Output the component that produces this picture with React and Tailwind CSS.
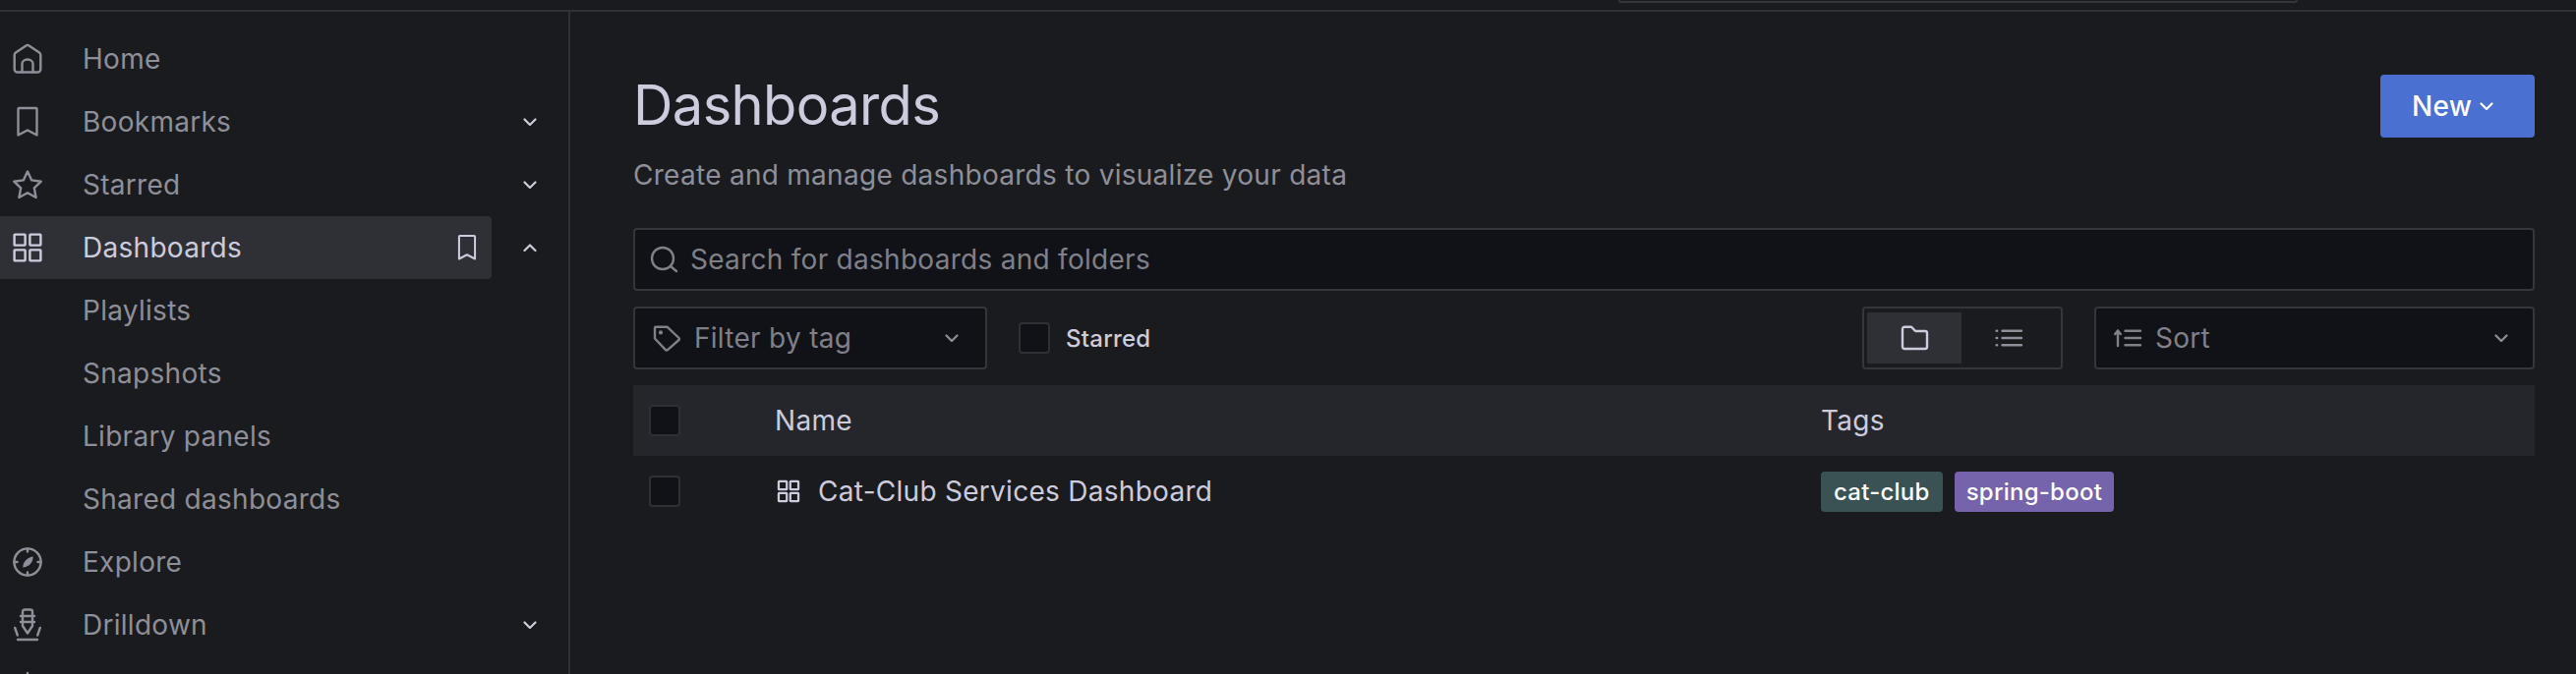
import React from "react";

const Svg = ({ className = "w-8 h-8", sw = 2.4, children }) => (
  <svg viewBox="0 0 32 32" fill="none" stroke="currentColor" strokeWidth={sw} strokeLinecap="round" strokeLinejoin="round" className={`shrink-0 overflow-visible ${className}`}>
    {children}
  </svg>
);

const Home = () => (
  <Svg>
    <path d="M14.5 2.4L4 9.6a3 3 0 0 0-1.3 2.4v14.5a3 3 0 0 0 3 3h20.6a3 3 0 0 0 3-3V12a3 3 0 0 0-1.3-2.4L17.5 2.4a2.6 2.6 0 0 0-3 0z" />
    <path d="M10.5 29.5V21a5.5 4.5 0 0 1 11 0v8.5" />
  </Svg>
);
const Bookmark = ({ className }) => (
  <Svg className={className}>
    <path d="M7.5 2H24.5a1 1 0 0 1 1 1v26.5L16 24.5l-9.5 5V3a1 1 0 0 1 1-1z" />
  </Svg>
);
const Star = () => (
  <Svg>
    <path d="M16 2.6l4.2 8.8 9.6 1.3-7 6.7 1.8 9.6-8.6-4.7-8.6 4.7 1.8-9.6-7-6.7 9.6-1.3z" />
  </Svg>
);
const Apps = ({ className, sw }) => (
  <Svg className={className} sw={sw}>
    <rect x="2.6" y="2.6" width="11" height="11" rx="0.6" />
    <rect x="18.4" y="2.6" width="11" height="11" rx="0.6" />
    <rect x="2.6" y="18.4" width="11" height="11" rx="0.6" />
    <rect x="18.4" y="18.4" width="11" height="11" rx="0.6" />
  </Svg>
);
const Compass = () => (
  <Svg>
    <circle cx="16" cy="16" r="13.6" />
    <path d="M16 2.5v3M16 26.5v3M2.5 16h3M26.5 16h3" />
    <path d="M21.6 10.4c.2 4-2 7.6-5 9.4-1.4.9-3 1.5-5.4 1.8.2-3.6 1.6-6.4 4-8.4 2-1.7 4-2.5 6.4-2.8z" fill="currentColor" stroke="none" />
  </Svg>
);
const Drilldown = () => (
  <Svg>
    <path d="M13 0.5h6a2 2 0 0 1 2 2V17l-5 7.5-5-7.5V2.5a2 2 0 0 1 2-2z" />
    <path d="M9 7h14M9 13h14" />
    <path d="M3.2 19l2.6 7.5M28.8 19l-2.6 7.5" />
    <path d="M6 31h20" />
  </Svg>
);
const Bell = () => (
  <Svg>
    <path d="M16 1v3M6 24V15a10 10 0 0 1 20 0v9l3 3H3z" />
  </Svg>
);
const Chevron = ({ up, className = "text-[#ccccdc]" }) => (
  <svg viewBox="0 0 24 24" fill="none" stroke="currentColor" strokeWidth="2.2" strokeLinecap="round" strokeLinejoin="round" className={`w-6 h-6 shrink-0 ${className}`}>
    <path d={up ? "M6.5 15l5.5-5.5 5.5 5.5" : "M6.5 9.5l5.5 5.5 5.5-5.5"} />
  </svg>
);
const Search = () => (
  <Svg>
    <circle cx="14" cy="15" r="11" />
    <path d="M22 23l6 5" />
  </Svg>
);
const Tag = () => (
  <Svg>
    <path d="M4 4.7h11.5L27.5 16a1.4 1.4 0 0 1 0 2L16 28.2a1.4 1.4 0 0 1-2 0L3 16.5V5.7a1 1 0 0 1 1-1z" />
    <circle cx="9" cy="10.4" r="0.9" fill="currentColor" />
  </Svg>
);
const Folder = () => (
  <Svg>
    <path d="M6 4.7h6.5a1.5 1.5 0 0 1 1.1.5l3 3.3a1.5 1.5 0 0 0 1.1.5H27a2 2 0 0 1 2 2V25a2 2 0 0 1-2 2H6a2 2 0 0 1-2-2V6.7a2 2 0 0 1 2-2z" />
  </Svg>
);
const ListIcon = () => (
  <Svg>
    <path d="M9.5 8.7H29M9.5 16H29M9.5 23.3H29" />
    <path d="M3.6 8.7h.6M3.6 16h.6M3.6 23.3h.6" />
  </Svg>
);
const SortIcon = () => (
  <Svg>
    <path d="M6 24V8.5M3.2 12L6 8.5 8.8 12" />
    <path d="M13.5 8.7H29M13.5 16H29M13.5 23.3H29" />
  </Svg>
);

const Row = ({ icon, label, chevron, active }) => (
  <div className="flex items-center h-16">
    <div className={`flex items-center h-16 w-[501px] rounded-r-[4px] ${active ? "bg-[#2f3036] text-[#ccccdc]" : "text-[#8e8f98]"}`}>
      <div className="w-[84px] pl-3 shrink-0">{icon}</div>
      <span className="flex-1 text-[28px] tracking-[0.01em]">{label}</span>
      {active && <Bookmark className="w-8 h-8 mr-[9px] scale-[0.85]" />}
    </div>
    {chevron && (
      <div className="w-[78px] flex justify-center">
        <Chevron up={chevron === "up"} />
      </div>
    )}
  </div>
);

const Checkbox = () => <div className="w-8 h-8 shrink-0 rounded-[4px] border-2 border-[#2f3036] bg-[#111217]" />;

export default function App() {
  return (
    <div className="w-[2620px] h-[686px] overflow-hidden flex flex-col bg-[#1a1b1f] font-['Inter',sans-serif] text-[#ccccdc]">
      <div className="h-3 shrink-0 border-b-2 border-[#2f3036] pl-[1646px]">
        <div className="w-[691px] h-[3px] border-b-2 border-x-2 rounded-b-[4px] border-[#35363c]" />
      </div>
      <div className="flex flex-1 min-h-0">
        <nav className="w-[580px] shrink-0 border-r-2 border-[#2f3036] pt-4 flex flex-col">
          <Row icon={<Home />} label="Home" />
          <Row icon={<Bookmark />} label="Bookmarks" chevron="down" />
          <Row icon={<Star />} label="Starred" chevron="down" />
          <Row icon={<Apps />} label="Dashboards" chevron="up" active />
          <Row label="Playlists" />
          <Row label="Snapshots" />
          <Row label="Library panels" />
          <Row label="Shared dashboards" />
          <Row icon={<Compass />} label="Explore" />
          <Row icon={<Drilldown />} label="Drilldown" chevron="down" />
          <Row icon={<Bell />} />
        </nav>
        <main className="flex-1 min-w-0 pl-16 pr-[42px] pt-16">
          <div className="flex justify-between items-start h-[122px]">
            <div>
              <h1 className="text-[56px] leading-[64px] font-normal tracking-[-0.011em] -mt-[1px]">Dashboards</h1>
              <p className="mt-[19px] text-[28px] leading-[40px] tracking-[0.01em] text-[#8e8f98]">Create and manage dashboards to visualize your data</p>
            </div>
            <button className="w-[157px] h-16 rounded-[4px] bg-[#4a70d2] text-white flex items-center pl-[32px]">
              <span className="text-[28px] font-medium tracking-[0.01em]">New</span>
              <Chevron className="text-white ml-[3px]" />
            </button>
          </div>
          <div className="mt-[34px] h-16 flex items-center rounded-[4px] border-2 border-[#35363c] bg-[#111217] pl-[14px] text-[#7f8088]">
            <Search />
            <span className="ml-[10px] text-[28px] tracking-[0.01em]">Search for dashboards and folders</span>
          </div>
          <div className="mt-4 h-16 flex items-center">
            <div className="w-[360px] h-16 flex items-center rounded-[4px] border-2 border-[#35363c] bg-[#111217] pl-[17px] pr-[22px] text-[#7f8088]">
              <Tag />
              <span className="ml-[11px] flex-1 text-[28px] tracking-[0.01em]">Filter by tag</span>
              <Chevron className="text-[#8e8f98]" />
            </div>
            <div className="ml-8"><Checkbox /></div>
            <span className="ml-4 pt-[2px] text-[24px] font-medium tracking-[0.01em]">Starred</span>
            <div className="ml-auto w-[204px] h-16 rounded-[4px] border-2 border-[#35363c] py-[4px] px-[3px] flex">
              <div className="flex-1 bg-[#2f3036] flex items-center justify-center text-[#ccccdc]"><Folder /></div>
              <div className="flex-1 flex items-center justify-center text-[#8e8f98] pr-[2px]"><ListIcon /></div>
            </div>
            <div className="ml-8 w-[448px] h-16 flex items-center rounded-[4px] border-2 border-[#35363c] bg-[#111217] pl-[16px] pr-[20px] text-[#7f8088]">
              <SortIcon />
              <span className="ml-[12px] flex-1 text-[28px] tracking-[0.01em]">Sort</span>
              <Chevron className="text-[#8e8f98]" />
            </div>
          </div>
          <div className="mt-4 h-[72px] bg-[#25262b] flex items-center pl-4">
            <Checkbox />
            <span className="ml-[96px] w-[1064px] text-[28px] tracking-[0.01em]">Name</span>
            <span className="text-[28px] tracking-[0.01em]">Tags</span>
          </div>
          <div className="h-[72px] flex items-center pl-4">
            <Checkbox />
            <div className="ml-[98px] w-[1064px] flex items-center">
              <Apps className="w-6 h-6" sw={3} />
              <span className="ml-[18px] text-[28px] tracking-[0.01em]">Cat-Club Services Dashboard</span>
            </div>
            <div className="-ml-[2px] flex gap-3">
              <span className="h-[41px] px-[13px] rounded-[4px] bg-[#3a5254] text-white text-[24px] font-medium leading-[41px] tracking-[0.01em]">cat-club</span>
              <span className="h-[41px] px-[12px] rounded-[4px] bg-[#7563ab] text-white text-[24px] font-medium leading-[41px] tracking-[0.01em]">spring-boot</span>
            </div>
          </div>
        </main>
      </div>
    </div>
  );
}
